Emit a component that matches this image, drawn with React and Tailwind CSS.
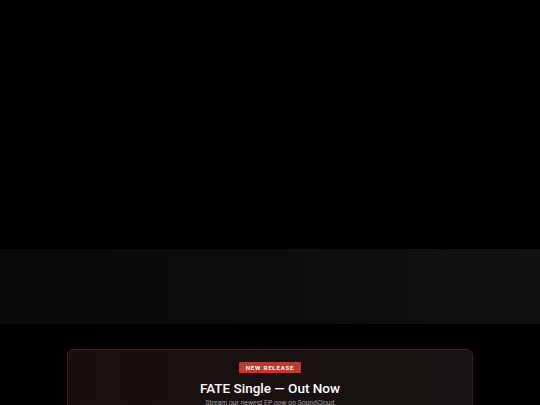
import React from 'react';

function App() {
  return (
    <div className="w-[540px] h-[405px] overflow-hidden bg-black" style={{ fontFamily: 'Roboto, "Noto Sans", sans-serif' }}>
      {/* Hero placeholder */}
      <div className="h-[249px] bg-black" />

      {/* Textured band */}
      <div className="h-[75px] bg-gradient-to-r from-[#090909] via-[#0c0c0c] to-[#111111]" />

      {/* Release card */}
      <div className="pt-[25px] px-[67px]">
        <div className="rounded-md border border-[#3f1f1f] bg-gradient-to-r from-[#1b0e0e] to-[#151313] flex flex-col items-center pt-[12px] pb-6">
          <span className="bg-[#c0392b] text-white text-[6px] font-bold tracking-[0.14em] uppercase px-[7px] h-[11px] flex items-center rounded-[1px]">
            New Release
          </span>
          <h2 className="mt-[7px] text-white text-[13.5px] font-medium leading-[16px]">FATE Single — Out Now</h2>
          <p className="mt-[3px] text-[6.8px] text-[#9a9a9a] leading-[9px]">Stream our newest EP now on SoundCloud</p>
        </div>
      </div>
    </div>
  );
}

export default App;
